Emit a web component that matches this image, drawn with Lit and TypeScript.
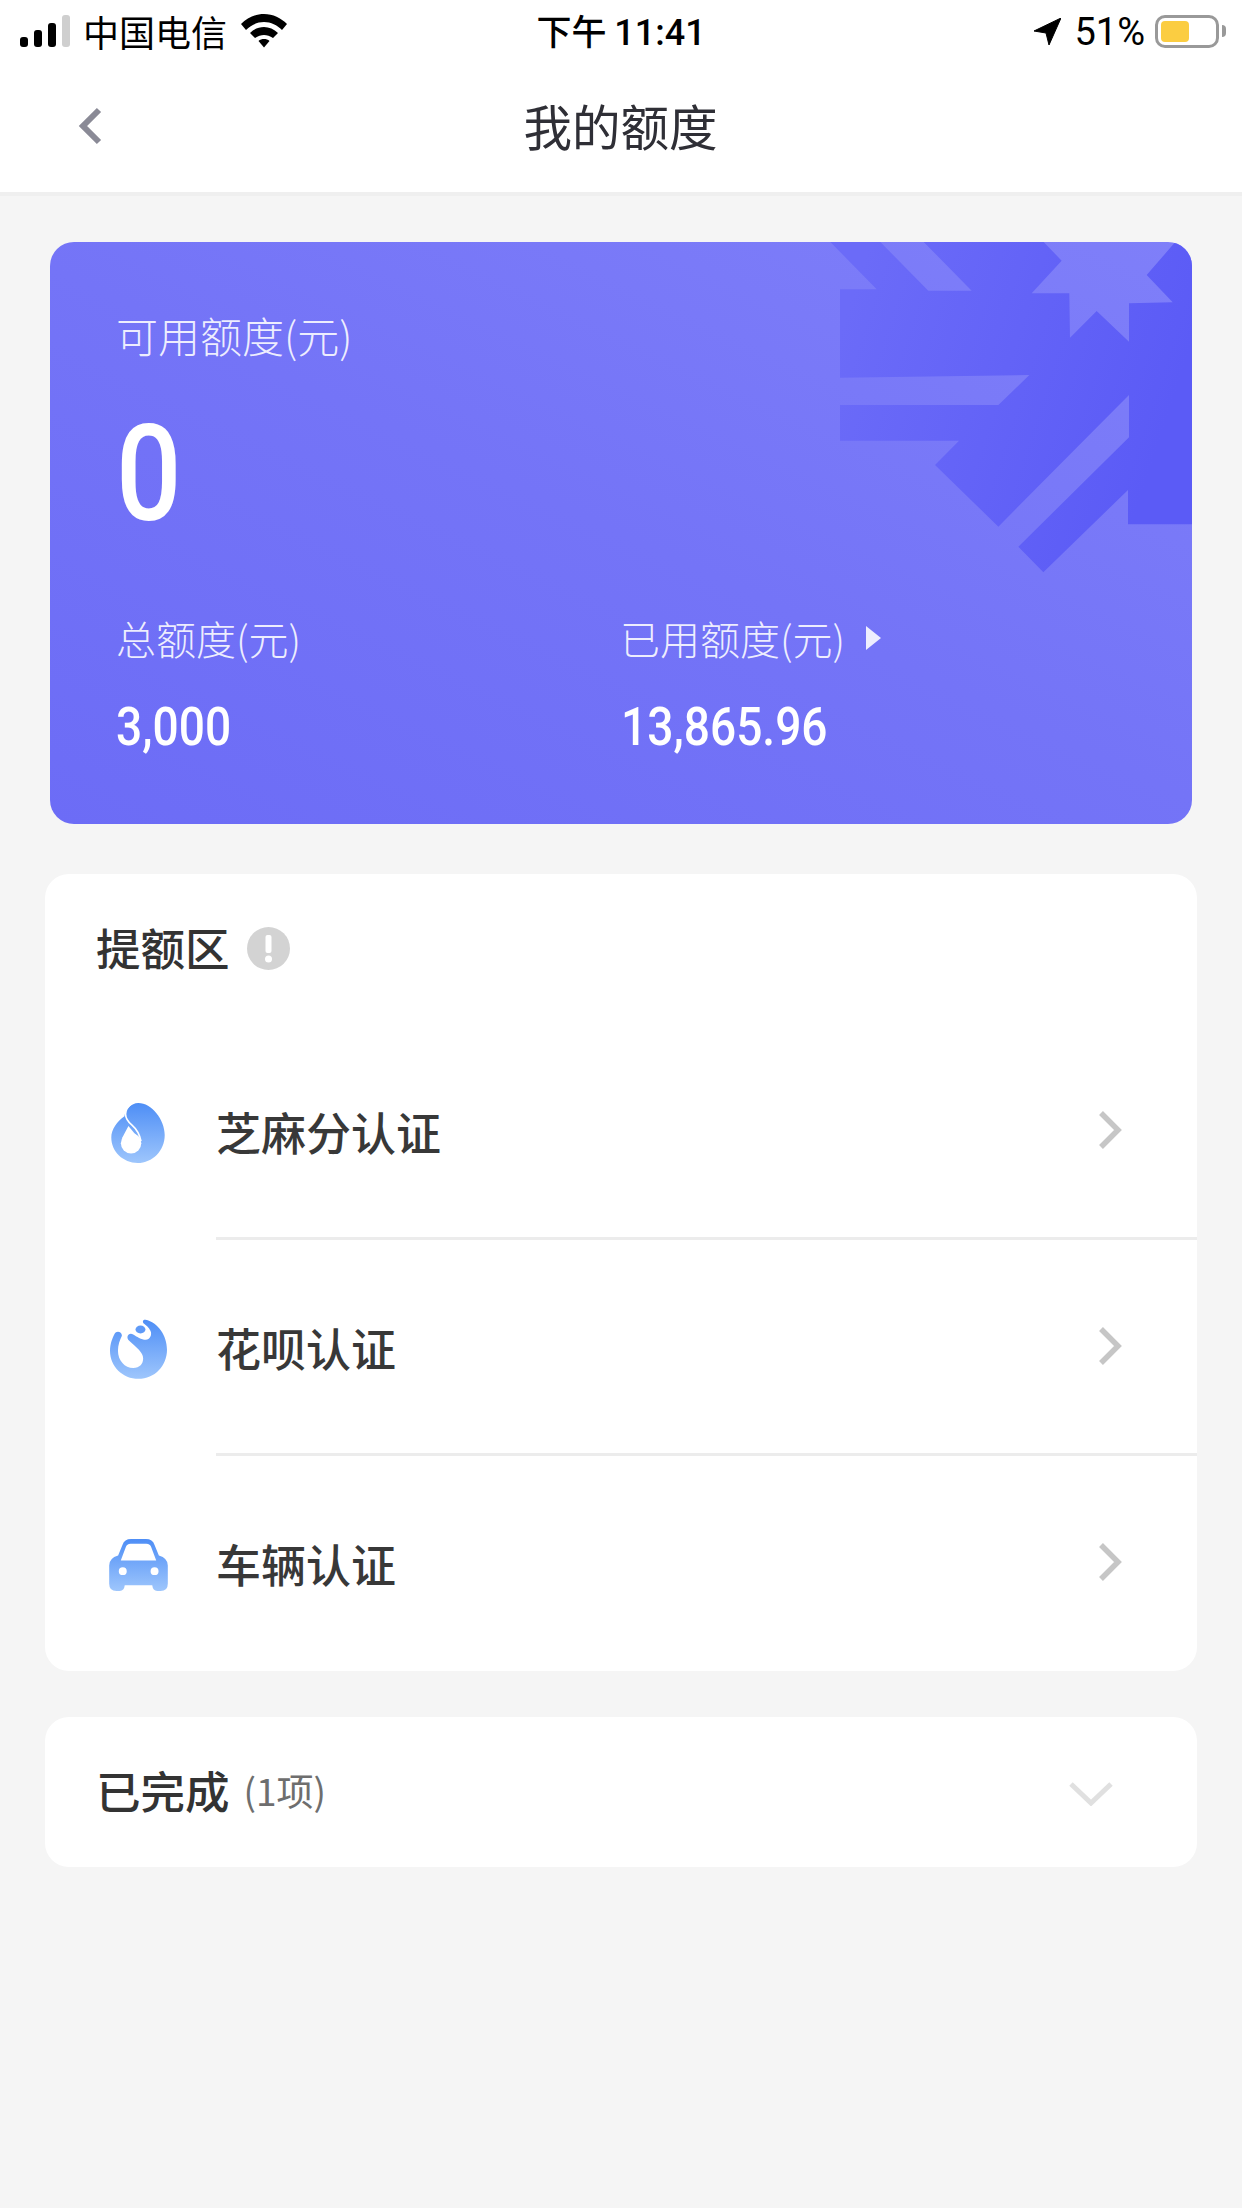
import { LitElement, html, css, svg } from "lit";
import { customElement } from "lit/decorators.js";

const chevronRight = html`<svg class="chev" width="24" height="40" viewBox="0 0 24 40"><polyline points="3,3 20,20 3,37" fill="none" stroke="#c6c6c6" stroke-width="5.5"/></svg>`;

const gradDef = (id: string) => svg`<defs><linearGradient id=${id} x1="0" y1="0" x2="0" y2="1"><stop offset="0" stop-color="#4e8ef6"/><stop offset="1" stop-color="#9ec6fc"/></linearGradient></defs>`;

const dropIcon = html`<svg width="54" height="60" viewBox="0 0 162 182">
  ${gradDef("g1")}
  <path d="M82 0C122 0 162 50 162 97C162 145 125 182 80 182C36 182 0 148 0 105C0 80 18 55 40 40C42 20 60 0 82 0Z" fill="url(#g1)"/>
  <path d="M62 1C36 22 38 46 62 66C78 80 86 92 90 116" fill="none" stroke="#fff" stroke-width="5"/>
  <circle cx="60" cy="122" r="31" fill="#fff"/>
  <path d="M52 70L90 116L32 108Z" fill="#fff"/>
</svg>`;

const huabeiIcon = html`<svg width="57" height="60" viewBox="0 0 172 180">
  ${gradDef("g2")}
  <path d="M107 2C145 10 172 50 172 92C172 140 135 180 86 180C38 180 0 142 0 95C0 75 8 55 14 44C18 34 36 36 36 50C30 62 24 78 24 95C24 125 45 147 70 147C90 147 100 135 100 118C100 100 80 85 58 65C46 55 56 38 70 46C80 52 95 62 108 62C120 62 128 48 122 35C118 25 108 18 103 14C96 8 100 0 107 2Z" fill="url(#g2)"/>
  <ellipse cx="92" cy="31" rx="15" ry="12" fill="#5f9af7"/>
</svg>`;

const carIcon = html`<svg width="59" height="52" viewBox="0 0 177 157">
  ${gradDef("g3")}
  <path fill-rule="evenodd" d="M40 18Q46 0 66 0H111Q131 0 137 18L150 50Q177 58 177 80V135Q177 157 155 157H145Q132 157 130 140H47Q45 157 32 157H22Q0 157 0 135V80Q0 58 27 50ZM35 65H142L127 25Q124 14 112 14H65Q53 14 50 25ZM41 85A12 12 0 1 0 41 109A12 12 0 1 0 41 85ZM137 85A12 12 0 1 0 137 109A12 12 0 1 0 137 85Z" fill="url(#g3)"/>
</svg>`;

const rows = [
  { icon: dropIcon, label: "芝麻分认证" },
  { icon: huabeiIcon, label: "花呗认证" },
  { icon: carIcon, label: "车辆认证" },
];

@customElement("app-root")
export class AppRoot extends LitElement {
  static styles = css`
    :host {
      display: block;
      width: 1242px;
      height: 2208px;
      background: #f5f5f5;
      font-family: "Noto Sans CJK SC", "Noto Sans", sans-serif;
      color: #333;
      overflow: hidden;
    }
    .top { background: #fff; border-bottom: 4px solid #efefef; }
    .status {
      height: 62px;
      display: grid;
      grid-template-columns: 1fr auto 1fr;
      align-items: center;
      color: #000;
      font-size: 36px;
      line-height: 44px;
    }
    .s-left { display: flex; align-items: center; padding-left: 20px; }
    .signal { display: flex; align-items: flex-end; gap: 6px; height: 32px; margin-right: 13px; }
    .signal i { display: block; width: 8px; background: #000; border-radius: 3px; }
    .signal i.off { background: #cfcfcf; }
    .carrier { letter-spacing: 0; margin-right: 14px; }
    .time { font-size: 35px; font-weight: 500; white-space: nowrap; line-height: 42px; }
    .time b { font-family: Roboto, sans-serif; font-weight: 500; font-size: 36px; letter-spacing: 0; }
    .s-right { display: flex; align-items: center; justify-content: flex-end; padding-right: 16px; }
    .pct { font-family: Roboto, sans-serif; font-size: 38px; line-height: 46px; margin: 2px 10px 0 13px; }
    .battery { display: flex; align-items: center; gap: 3px; }
    .bat-body {
      width: 64px; height: 33px; box-sizing: border-box;
      border: 3px solid #999; border-radius: 10px; padding: 3px;
    }
    .bat-fill { width: 28px; height: 100%; background: #fbcd41; border-radius: 4px; }
    .bat-nub { width: 4px; height: 12px; background: #999; border-radius: 0 4px 4px 0; }
    .nav {
      height: 130px;
      display: grid;
      grid-template-columns: 1fr auto 1fr;
      align-items: center;
    }
    .back { padding-left: 78px; display: flex; margin-top: -3px; }
    .title { font-size: 48.500px; line-height: 60px; color: #2f2f36; margin: -5px 0 0 -1px; }

    .banner {
      position: relative;
      overflow: hidden;
      margin: 46px 50px 0;
      height: 582px;
      box-sizing: border-box;
      border-radius: 24px;
      padding: 68px 0 0 66px;
      color: #fff;
      background: linear-gradient(205deg, #7f7ff9 0%, #7474f7 50%, #6c6cf6 100%);
    }
    .art { position: absolute; left: 730px; top: -17px; }
    .content { position: relative; }
    .lbl { font-size: 40px; line-height: 50px; font-weight: 300; color: rgba(255,255,255,0.88); display: flex; align-items: center; }
    .lbl.lg { font-size: 42px; }
    .big {
      margin-top: 45px;
      margin-bottom: -2px;
      font-family: Roboto, sans-serif;
      font-size: 134px;
      line-height: 140px;
      font-weight: 500;
      display: block;
      transform-origin: left center;
      transform: scaleX(0.86);
    }
    .cols { display: grid; grid-template-columns: 504px 1fr; margin-top: 70px; }
    .val {
      margin-top: 34px;
      font-family: Roboto, sans-serif;
      font-size: 53px;
      line-height: 60px;
      font-weight: 500;
      transform-origin: left center;
      transform: scaleX(0.87);
    }
    .cols > div + div .val { margin-left: 1px; }
    .tri { width: 0; height: 0; margin-left: 21px; border-left: 15px solid rgba(255,255,255,0.88); border-top: 12px solid transparent; border-bottom: 12px solid transparent; }

    .card { margin: 50px 45px 0; background: #fff; border-radius: 24px; }
    .head { height: 151px; padding: 47px 0 0 51px; box-sizing: border-box; }
    .sect { display: flex; align-items: center; font-size: 44.500px; line-height: 52px; font-weight: 500; color: #333; }
    .sect svg { margin: 2px 0 0 17px; }
    .row { display: flex; align-items: center; height: 212px; box-sizing: border-box; padding: 4px 75px 0 63px; }
    .ico { width: 60px; display: flex; justify-content: center; margin-right: 48px; }
    .row .txt { flex: 1; font-size: 45px; line-height: 56px; font-weight: 500; color: #383838; margin-top: -2px; }
    .chev { margin: -3px 0 3px; }
    .sep { height: 3px; margin: 0 0 1px 171px; background: #ececec; }
    .rows { height: 646px; }
    .done { margin-top: 46px; height: 150px; display: flex; align-items: center; padding: 0 84px 0 51px; }
    .done .sect { flex: 1; margin-top: -5px; }
    .done svg { margin-top: 3px; }
    .count { font-size: 37px; font-weight: 400; color: #6e6e6e; margin-left: 14px; }
  `;

  render() {
    const art = "150,50 300,50 445,197 575,197 430,50 790,50 845,107 755,205 868,205 870,338 950,258 1047,350 1047,235 1178,232 1100,150 1185,52 1240,50 1240,898 1044,898 1044,795 790,1042 715,965 1047,637 1047,510 655,905 465,720 537,647 180,647 180,540 655,540 748,450 180,458 180,193 290,193";
    return html`
      <div class="top">
        <div class="status">
          <div class="s-left">
            <div class="signal">
              <i style="height:10px"></i><i style="height:17px"></i><i style="height:24px"></i><i class="off" style="height:32px"></i>
            </div>
            <span class="carrier">中国电信</span>
            <svg width="46" height="34" viewBox="0 0 46 34"><path d="M23 0C32 0 40 4 46 10L41 16C36 11 30 8 23 8C16 8 10 11 5 16L0 10C6 4 14 0 23 0Z" fill="#000"/><path d="M23 13C28 13 33 15 37 19L32 24C29 22 26 21 23 21C20 21 17 22 14 24L9 19C13 15 18 13 23 13Z" fill="#000"/><path d="M23 25C25 25 27 25.500 28.500 27L23 33.500L17.500 27C19 25.500 21 25 23 25Z" fill="#000"/></svg>
          </div>
          <div class="time">下午 <b>11:41</b></div>
          <div class="s-right">
            <svg width="27" height="27" viewBox="0 0 27 27"><path d="M27 0L15 27L12 15L0 13Z" fill="#000" stroke="#000" stroke-linejoin="round"/></svg>
            <span class="pct">51%</span>
            <div class="battery"><div class="bat-body"><div class="bat-fill"></div></div><div class="bat-nub"></div></div>
          </div>
        </div>
        <div class="nav">
          <div class="back"><svg width="24" height="38" viewBox="0 0 24 38"><polyline points="21,3 5,19 21,35" fill="none" stroke="#8a8a96" stroke-width="6"/></svg></div>
          <div class="title">我的额度</div>
          <div></div>
        </div>
      </div>

      <div class="banner">
        <svg class="art" width="440" height="360" viewBox="0 0 1320 1080">
          <defs><linearGradient id="ag" x1="0" y1="0" x2="1" y2="0.3"><stop offset="0.1" stop-color="#6b6bf8"/><stop offset="1" stop-color="#5b5bf6"/></linearGradient></defs>
          <polygon points=${art} fill="url(#ag)"/>
        </svg>
        <div class="content">
          <div class="lbl lg">可用额度(元)</div>
          <div class="big">0</div>
          <div class="cols">
            <div>
              <div class="lbl">总额度(元)</div>
              <div class="val">3,000</div>
            </div>
            <div>
              <div class="lbl">已用额度(元)<span class="tri"></span></div>
              <div class="val">13,865.96</div>
            </div>
          </div>
        </div>
      </div>

      <div class="card">
        <div class="head">
          <div class="sect">提额区
            <svg width="43" height="43" viewBox="0 0 43 43"><circle cx="21.500" cy="21.500" r="21.500" fill="#d3d3d3"/><rect x="18.500" y="8" width="6" height="18" rx="2" fill="#fff"/><circle cx="21.500" cy="32" r="3.500" fill="#fff"/></svg>
          </div>
        </div>
        <div class="rows">
          ${rows.map((r, i) => html`
            ${i ? html`<div class="sep"></div>` : ""}
            <div class="row">
              <div class="ico">${r.icon}</div>
              <div class="txt">${r.label}</div>
              ${chevronRight}
            </div>`)}
        </div>
      </div>

      <div class="card done">
        <div class="sect">已完成<span class="count">(1项)</span></div>
        <svg width="44" height="24" viewBox="0 0 44 24"><polyline points="2,2 22,21 42,2" fill="none" stroke="#e0e0e0" stroke-width="5"/></svg>
      </div>
    `;
  }
}
